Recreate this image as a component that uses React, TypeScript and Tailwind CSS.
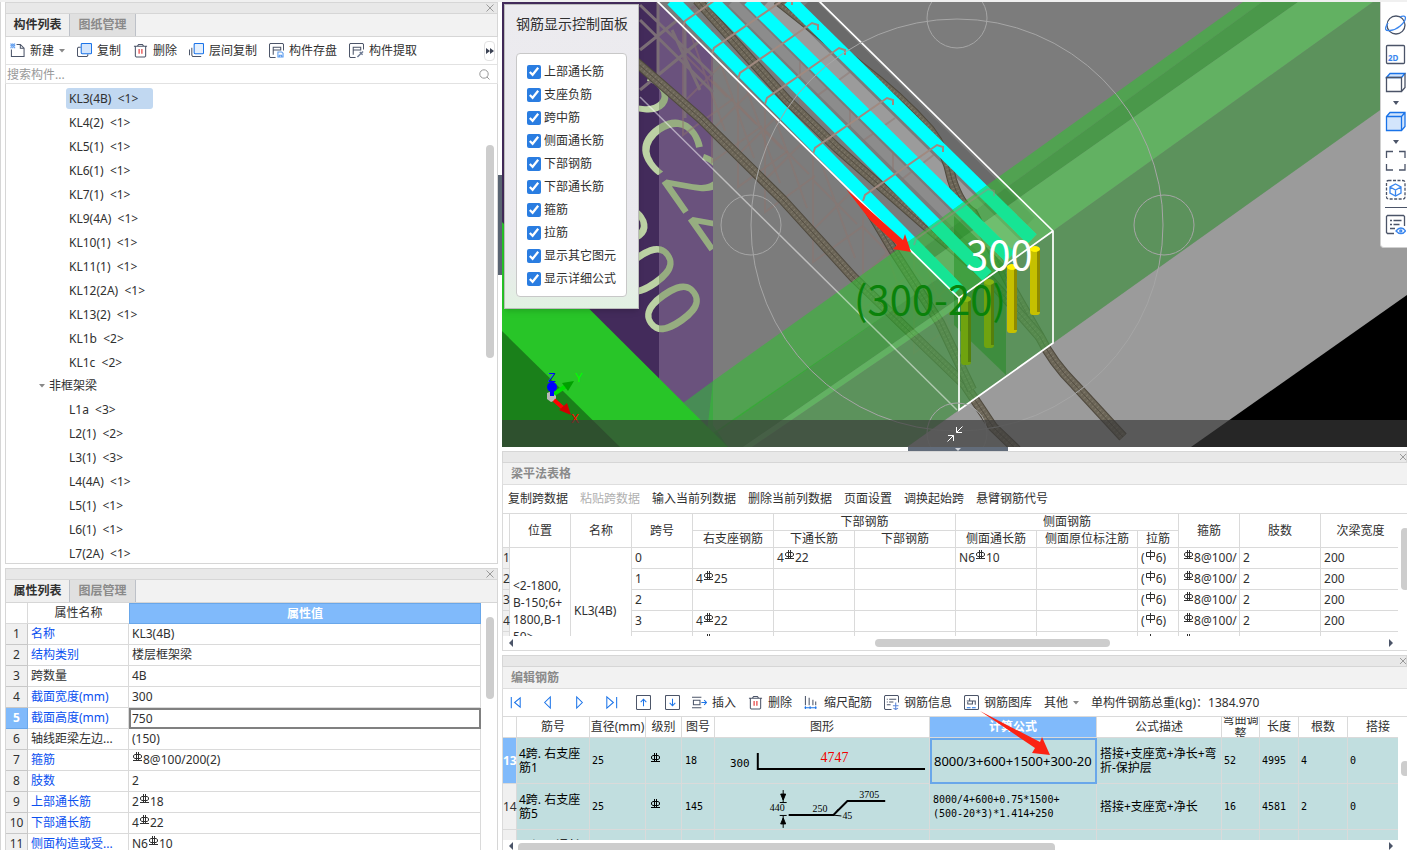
import type { ReactNode } from "react";
import clsx from "clsx";

type CellProps = { children?: ReactNode; className?: string };

const frameBeams = [
  "KL3(4B)  <1>",
  "KL4(2)  <1>",
  "KL5(1)  <1>",
  "KL6(1)  <1>",
  "KL7(1)  <1>",
  "KL9(4A)  <1>",
  "KL10(1)  <1>",
  "KL11(1)  <1>",
  "KL12(2A)  <1>",
  "KL13(2)  <1>",
  "KL1b  <2>",
  "KL1c  <2>",
];

const secondaryBeams = [
  "L1a  <3>",
  "L2(1)  <2>",
  "L3(1)  <3>",
  "L4(4A)  <1>",
  "L5(1)  <1>",
  "L6(1)  <1>",
  "L7(2A)  <1>",
];

const displayOptions = [
  "上部通长筋",
  "支座负筋",
  "跨中筋",
  "侧面通长筋",
  "下部钢筋",
  "下部通长筋",
  "箍筋",
  "拉筋",
  "显示其它图元",
  "显示详细公式",
];

// "#" marks the HRB400 grade sign, "$" the HPB300 one
const properties = [
  { name: "名称", value: "KL3(4B)", key: true },
  { name: "结构类别", value: "楼层框架梁", key: true },
  { name: "跨数量", value: "4B", key: false },
  { name: "截面宽度(mm)", value: "300", key: true },
  { name: "截面高度(mm)", value: "750", key: true },
  { name: "轴线距梁左边...", value: "(150)", key: false },
  { name: "箍筋", value: "#8@100/200(2)", key: true },
  { name: "肢数", value: "2", key: true },
  { name: "上部通长筋", value: "2#18", key: true },
  { name: "下部通长筋", value: "4#22", key: true },
  { name: "侧面构造或受...", value: "N6#10", key: true },
];

const spans = [
  { right: "", bottom: "4#22", side: "N6#10" },
  { right: "4#25", bottom: "", side: "" },
  { right: "", bottom: "", side: "" },
  { right: "4#22", bottom: "", side: "" },
  { right: "4#22", bottom: "", side: "" },
  { right: "", bottom: "", side: "" },
];

function Grade({ plain }: { plain?: boolean }) {
  return (
    <svg
      viewBox="0 0 11 10"
      className="inline-block w-[11px] h-[10px] align-[2px]"
      fill="none"
      stroke="currentColor"
    >
      {plain ? (
        <path d="M1.500 2.500h8v4h-8zM5.500 0v10" />
      ) : (
        <path d="M3 2.500h5l1.500 1v2L8 6.500H3L1.500 5.500v-2zM4.500 0v9M6.500 0v9M1 8.500h9" />
      )}
    </svg>
  );
}

function Rebar({ text }: { text: string }) {
  return (
    <>
      {text.split(/([#$])/).map((part, i) =>
        part === "#" || part === "$" ? (
          <Grade key={i} plain={part === "$"} />
        ) : (
          part
        )
      )}
    </>
  );
}

function Strip({ edge }: { edge?: boolean }) {
  return (
    <div className="h-3 shrink-0 flex justify-end items-center bg-[#e8e8e8] border border-[#d6d6d6]">
      <button
        aria-label="关闭"
        className={clsx("flex justify-center overflow-hidden", edge ? "w-[6px]" : "w-[14px]")}
      >
        <svg viewBox="0 0 8 8" className="size-2 shrink-0" stroke="#9a9a9a">
          <path d="M.5.5l7 7M7.500.5l-7 7" />
        </svg>
      </button>
    </div>
  );
}

function Tabs({ active, other }: { active: string; other: string }) {
  return (
    <div className="h-[23px] shrink-0 flex bg-[#f2f2f2] border-x border-b border-[#d6d6d6] leading-[22px]">
      <button className="w-16 border-r border-[#bdc1c8] bg-[#f0f0f0] font-bold">
        {active}
      </button>
      <button className="w-[66px] border-r border-[#bdc1c8] bg-[#e0e0e0] text-[#8a8a8a] font-bold">
        {other}
      </button>
    </div>
  );
}

function Tool({ icon, label }: { icon: ReactNode; label: string }) {
  return (
    <button className="flex items-center gap-[5px] whitespace-nowrap">
      {icon}
      {label}
    </button>
  );
}

function Caret() {
  return (
    <svg viewBox="0 0 6 4" className="w-[6px] h-1 shrink-0" fill="#888">
      <path d="M0 0h6L3 3.500z" />
    </svg>
  );
}

function Icon({ children }: { children: ReactNode }) {
  return (
    <svg
      viewBox="0 0 16 16"
      className="size-[15px] shrink-0"
      fill="none"
      stroke="#4b5468"
      strokeWidth="1.100"
    >
      {children}
    </svg>
  );
}

function TrashIcon() {
  return (
    <Icon>
      <path d="M1 3.500h14M4.500 3.500L6 1.500h4l1.500 2M2.500 4v10l1 1h9l1-1V4" />
      <path d="M6.500 6.500v5M9.500 6.500v5" stroke="#e02020" />
    </Icon>
  );
}

function ScrollArrow({ right }: { right?: boolean }) {
  return (
    <svg viewBox="0 0 4 8" className="w-1 h-2 shrink-0" fill="#4b5468">
      <path d={right ? "M0 0v8l4-4z" : "M4 0v8L0 4z"} />
    </svg>
  );
}

function ComponentPanel() {
  return (
    <section className="flex-1 min-h-0 flex flex-col">
      <Strip />
      <Tabs active="构件列表" other="图纸管理" />
      <div className="h-7 shrink-0 flex items-center gap-3 pl-1 pr-[2px] border-x border-b border-[#e2e2e2]">
        <button className="flex items-center gap-[5px] whitespace-nowrap">
          <Icon>
            <path d="M7 1.500h4l4 4v9H1.500V7M11 1.500v4h4" />
            <path
              d="M.5 1h1M2.500 1h1M4.500 1h1M1.500 2h1M3.500 2h1M.5 3h1M2.500 3h1M4.500 3h1M1.500 4h1M3.500 4h1M.5 5h1M2.500 5h1M4.500 5h1"
              stroke="#1a73e8"
            />
          </Icon>
          新建
          <Caret />
        </button>
        <Tool
          label="复制"
          icon={
            <Icon>
              <path d="M4 4.500H1.500l-1 1v8l1 1h9l1-1V12" />
              <rect x="4.500" y=".5" width="11" height="11" rx="1" fill="#d3e5fc" stroke="#1a73e8" />
            </Icon>
          }
        />
        <Tool label="删除" icon={<TrashIcon />} />
        <Tool
          label="层间复制"
          icon={
            <Icon>
              <path d="M.5 7v6M3 5v8l1 1.500h9" />
              <rect x="5.500" y=".5" width="10" height="11" rx="1" fill="#e3effd" stroke="#1a73e8" />
            </Icon>
          }
        />
        <Tool
          label="构件存盘"
          icon={
            <Icon>
              <path d="M7 15.500H1.500l-1-1v-13l1-1h13l1 1V8M4.500 12.500V4.500h8v3H5" />
              <path d="M9.500 9.500h4l1.500 1.500v4H9.500zM11 15v-2h2.500v2" stroke="#5b9bee" />
            </Icon>
          }
        />
        <Tool
          label="构件提取"
          icon={
            <Icon>
              <path d="M7 15.500H1.500l-1-1v-13l1-1h13l1 1V7M4.500 12.500V4.500h8v3H5" />
              <path d="M9 15l4-4M11.500 9.500l3 3M13 11l2-2" strokeWidth="1.500" stroke="#6d7a93" />
            </Icon>
          }
        />
        <button
          aria-label="更多"
          className="ml-auto w-[11px] h-5 rounded border border-[#e2e2e2] flex items-center justify-center"
        >
          <svg viewBox="0 0 8 6" className="w-2 h-[6px] shrink-0" fill="#3c4354">
            <path d="M0 0l4 3-4 3zM4 0l4 3-4 3z" />
          </svg>
        </button>
      </div>
      <div className="h-[19px] shrink-0 flex items-center pl-[1px] pr-[7px] border-x border-b border-[#e2e2e2]">
        <input
          type="text"
          aria-label="搜索构件"
          placeholder="搜索构件..."
          className="flex-1 h-[18px] outline-none placeholder:text-[#999]"
        />
        <svg viewBox="0 0 11 11" className="size-[11px]" fill="none" stroke="#999">
          <circle cx="5" cy="5" r="4.200" />
          <path d="M8 8l2.500 2.500" />
        </svg>
      </div>
      <div className="flex-1 min-h-0 flex border-x border-b border-[#d6d6d6]">
        <ul className="flex-1 overflow-hidden pt-[2px] whitespace-pre">
          {frameBeams.map((item, i) => (
            <li key={item} className="h-6 pl-[60px] flex items-center">
              <span
                className={clsx(
                  "w-[87px] h-[21px] px-[3px] leading-[21px]",
                  i === 0 && "rounded-[3px] bg-[#c1d8f1]"
                )}
              >
                {item}
              </span>
            </li>
          ))}
          <li className="h-6 pl-[33px] flex items-center gap-1">
            <Caret />
            非框架梁
          </li>
          {secondaryBeams.map((item) => (
            <li key={item} className="h-6 pl-[63px] flex items-center">
              {item}
            </li>
          ))}
        </ul>
        <div className="w-[11px] pt-[61px]">
          <div className="w-2 h-[213px] rounded bg-[#cdcdcd]" />
        </div>
      </div>
    </section>
  );
}

function PropertyPanel() {
  return (
    <section className="h-[282px] shrink-0 flex flex-col overflow-hidden">
      <Strip />
      <Tabs active="属性列表" other="图层管理" />
      <div className="flex-1 min-h-0 flex border-x border-[#d6d6d6] overflow-hidden">
        <div className="flex-1 overflow-hidden">
          <table className="w-full table-fixed border-separate border-spacing-0">
            <colgroup>
              <col className="w-[22px]" />
              <col className="w-[101px]" />
              <col />
            </colgroup>
            <thead>
              <tr className="h-[21px]">
                <th className="border-r border-b border-[#dadada]" />
                <th className="border-b border-[#dadada] font-normal">属性名称</th>
                <th className="border border-[#69a7ea] bg-[#80bafb] text-white font-bold">
                  属性值
                </th>
              </tr>
            </thead>
            <tbody>
              {properties.map((row, i) => {
                const selected = i === 4;
                return (
                  <tr key={row.name} className="h-[21px] leading-5">
                    <td
                      className={clsx(
                        "p-0 text-center border-r border-b",
                        selected
                          ? "bg-[#80bafb] border-[#69a7ea] text-white font-bold"
                          : "bg-[#f0f0f0] border-[#c8c8c8]"
                      )}
                    >
                      {i + 1}
                    </td>
                    <td
                      className={clsx(
                        "p-0 pl-[3px] border-r border-b border-[#dadada] whitespace-nowrap",
                        row.key && "text-[#0a50f0]"
                      )}
                    >
                      {row.name}
                    </td>
                    {selected ? (
                      <td className="p-0">
                        <input
                          aria-label={row.name}
                          defaultValue={row.value}
                          className="block w-full h-[21px] pl-px border-2 border-[#808080] outline-none"
                        />
                      </td>
                    ) : (
                      <td className="p-0 pl-[3px] border-r border-b border-[#dadada]">
                        <Rebar text={row.value} />
                      </td>
                    )}
                  </tr>
                );
              })}
            </tbody>
          </table>
        </div>
        <div className="w-4 pl-[5px] pt-[14px]">
          <div className="w-2 h-[82px] rounded bg-[#cdcdcd]" />
        </div>
      </div>
    </section>
  );
}

const ropes = [
  "M777 0L860 66Q900 96 930 130Q946 150 952 180Q960 205 973 213L1013 290L1040 337Q1052 362 1075 385L1123 437",
  "M697 0L787 100L837 148L925 225L990 280L1040 337",
  "M636 62L700 118L783 200L853 277L965 385L993 427L1017 450",
  "M868 208L893 250L940 323L972 390",
];

const bars = [
  "M672 0L958 290",
  "M711 0L987 276",
  "M749 0L1010 257",
  "M789 0L1032 239",
];

const stirrups = [
  [683, 23],
  [712, 50],
  [738, 75],
  [765, 100],
  [813, 150],
  [863, 197],
  [914, 241],
];

const yellowBars = [
  { x: 1030, y: 247, front: true },
  { x: 1007, y: 265, front: true },
  { x: 984, y: 280, front: false },
  { x: 961, y: 297, front: false },
];

function SlabLabel() {
  return (
    <g fontSize="80" fontFamily="Noto Sans, sans-serif">
      <text transform="translate(668 143) rotate(55)" x="-71" y="28">
        2C22
      </text>
      <text transform="translate(672 308) rotate(55)" x="-160" y="28">
        1200
      </text>
    </g>
  );
}

function Scene() {
  return (
    <svg
      viewBox="502 2 905 445"
      preserveAspectRatio="xMinYMin slice"
      className="absolute inset-0 size-full"
      fill="none"
    >
      <defs>
        <clipPath id="slab-side">
          <rect x="502" y="2" width="157" height="445" />
        </clipPath>
        <clipPath id="slab-face">
          <rect x="659" y="2" width="54" height="445" />
        </clipPath>
        <clipPath id="beam-joint">
          <path d="M905 244L1000 176L1053 231L959 298z" />
        </clipPath>
      </defs>
      <rect x="502" y="2" width="905" height="445" fill="#7c7c7c" />
      <path d="M907 447L1380 110L1407 91V447z" fill="#9b9b9b" />
      <path d="M1191 447L1407 295V447z" fill="#000" />

      {/* slab with its label */}
      <rect x="502" y="2" width="157" height="445" fill="#432b5b" />
      <rect x="659" y="2" width="54" height="445" fill="#6a527d" />
      <g clipPath="url(#slab-side)" fill="#bcd2a4">
        <SlabLabel />
      </g>
      <g clipPath="url(#slab-face)" fill="#96ad80">
        <SlabLabel />
      </g>
      <path d="M502 222L728 447H502z" fill="#28c528" />
      <path d="M502 331L620 447H502z" fill="#1a801a" />

      {/* beam body */}
      <path d="M658 2L959 298L1053 231L820 2z" fill="#7a7a7a" />
      <path d="M808 2L1030 222" stroke="#6a6a6a" strokeWidth="13" />
      <path d="M732 2L985 252" stroke="#8c8c8c" strokeWidth="10" />
      <path d="M768 2L1015 245" stroke="#9b9b9b" strokeWidth="14" />

      {/* stirrups */}
      <g stroke="#8d746c" strokeWidth="2" strokeOpacity=".45">
        {stirrups.map(([x, y]) => (
          <path
            key={x}
            d={`M${x} ${y}v112l50 -36M${x} ${y + 30}l44 44M${x} ${y + 80}l46 -46M${x + 8} ${y + 12}l34 96`}
          />
        ))}
        <path d="M800 62V108L850 72M850 110V150L895 118M893 140V186L940 150" />
      </g>
      <path
        d="M640 20L713 92M640 50L700 2M640 90L713 30M658 2V76M685 20V118M640 5L713 75M672 30L700 90"
        stroke="#7b6e76"
        strokeWidth="3"
      />

      {ropes.map((d) => (
        <g key={d} strokeLinejoin="round">
          <path d={d} stroke="#4f493e" strokeWidth="10" />
          <path d={d} stroke="#6b6557" strokeWidth="8" />
          <path d={d} stroke="#7f7869" strokeWidth="6" strokeDasharray="1 3" />
          <path d={d} stroke="#544e42" strokeWidth="1" />
        </g>
      ))}

      {bars.map((d) => (
        <path key={d} d={d} stroke="#00ffff" strokeWidth="13" />
      ))}

      {/* crossing beam, left of the selected one */}
      <path d="M683 403L713 381V425L728 447H640z" fill="#488c55" />
      <g fillOpacity=".6">
        <path d="M713 381L905 244L939 278L706 440z" fill="#36bd36" />
        <path d="M713 433L939 278L959 298L743 447H726z" fill="#2aac29" />
        <path d="M743 447L959 298V306L752 447z" fill="#51d651" />
        {/* over it and to the right */}
        <path d="M905 244L1243 2H1262L915 254z" fill="#36bd36" />
        <path d="M915 254L1262 2H1298L925 264z" fill="#2aac29" />
        <path d="M925 264L1298 2H1373L1053 231L959 298z" fill="#51d651" />
        <path d="M752 447L959 306V298L1053 231L1373 2H1407V91L907 447z" fill="#47a247" />
      </g>
      <path d="M640 360L728 447H640z" fill="#28c528" />
      <path d="M954 216L1006 266V375L954 325z" fill="#118811" fillOpacity=".4" />
      <g clipPath="url(#beam-joint)">
        {bars.map((d) => (
          <path key={d} d={d} stroke="#16e494" strokeWidth="13" />
        ))}
      </g>
      <g stroke="#a08a80" strokeWidth="2">
        {stirrups.map(([x, y]) => (
          <path
            key={x}
            d={`M${x} ${y + 4}l2 -6l72 -50l6 2v5`}
            strokeOpacity={x > 900 ? ".5" : "1"}
          />
        ))}
      </g>

      {yellowBars.map((bar) => (
        <g key={bar.x}>
          <rect
            x={bar.x}
            y={bar.y}
            width="10"
            height="68"
            rx="3"
            fill={bar.front ? "#c6c000" : "#6fa30f"}
          />
          <rect
            x={bar.x + 7}
            y={bar.y + 3}
            width="3"
            height="62"
            fill={bar.front ? "#8f8a00" : "#557f0c"}
          />
          <ellipse
            cx={bar.x + 5}
            cy={bar.y + 2}
            rx="5"
            ry="3"
            fill={bar.front ? "#fff200" : "#87b512"}
          />
        </g>
      ))}

      <path d="M640 97L957 410" stroke="#fff" strokeOpacity=".5" strokeWidth="1.500" />
      <path
        d="M657 1L959 298V410L1053 343V231L819 1M959 298L1053 231"
        stroke="#fff"
        strokeWidth="1.700"
      />

      <g stroke="#a6a6a6">
        <circle cx="957" cy="225" r="206" />
        <circle cx="957" cy="18" r="30" />
        <circle cx="751" cy="225" r="30" />
        <circle cx="1164" cy="225" r="30" />
        <circle cx="957" cy="433" r="30" />
      </g>

      <g fontSize="40" fontFamily="Noto Sans CJK SC, sans-serif">
        <text x="966" y="270" fill="#fff">
          300
        </text>
        <text x="854" y="315" fill="#0a820a">
          (300-20)
        </text>
      </g>
      <path
        d="M846 189L903 240L905 234L911 252L893 249L897 245L870 220z"
        fill="#fb2314"
      />

      {/* axes */}
      <path d="M547 393l5-2 4 3v6l-5 2-4-3z" fill="#b9b9b9" />
      <path d="M554 394L566 386" stroke="#00e000" strokeWidth="4" />
      <path d="M562 383L574 381L568 391z" fill="#00a000" />
      <path d="M554 400L563 408" stroke="#f00" strokeWidth="4" />
      <path d="M567 403L571 415L559 410z" fill="#d00000" />
      <rect x="550" y="386" width="4" height="10" fill="#00f" />
      <ellipse cx="552" cy="387" rx="5" ry="5" fill="#00f" />
      <g fontSize="12" fontFamily="Liberation Sans, sans-serif" textAnchor="middle">
        <text x="552" y="382" fill="#00f">
          Z
        </text>
        <text x="579" y="382" fill="#0f0">
          Y
        </text>
        <text x="575" y="423" fill="#f00">
          X
        </text>
      </g>
    </svg>
  );
}

function DisplayPanel() {
  return (
    <form className="absolute left-[2px] top-[2px] w-[135px] h-[305px] px-[11px] pt-[10px] border border-[#bcbcbc] bg-linear-to-t from-[#e2f1e2] via-[#eae9ee] via-20% to-[#ecebef] shadow-md">
      <h2 className="text-[14px] leading-[18px] whitespace-nowrap">钢筋显示控制面板</h2>
      <div className="mt-5 w-[111px] h-[244px] pt-[6px] pl-[10px] rounded border border-[#c8c8c8] bg-white">
        {displayOptions.map((option) => (
          <label key={option} className="h-[23px] flex items-center gap-[3px] whitespace-nowrap">
            <input type="checkbox" defaultChecked className="size-[14px] accent-[#2a7de1]" />
            {option}
          </label>
        ))}
      </div>
    </form>
  );
}

function ViewToolbar() {
  return (
    <div className="absolute right-0 top-0 w-[27px] h-[246px] rounded-bl bg-white border-l border-b border-[#d0d0d0] pl-1 pt-3 flex flex-col items-start overflow-hidden">
      <button aria-label="动态观察">
        <svg viewBox="0 0 21 21" className="size-[21px]" fill="none" stroke="#4b5468" strokeWidth="1.300">
          <circle cx="11" cy="11" r="9" />
          <path d="M3 9C-1 15 0 17 5 16.500C12 16 20 9 20.500 4C20.500 2 18 1.500 15 3" stroke="#3a86ee" />
        </svg>
      </button>
      <button aria-label="二维" className="mt-[9px]">
        <svg viewBox="0 0 21 21" className="size-[21px]" fill="none" stroke="#4b5468" strokeWidth="1.300">
          <rect x="1.500" y="1.500" width="18" height="18" rx="1" />
          <text x="3" y="17" fontSize="8" fontWeight="700" fontFamily="Noto Sans, sans-serif" fill="#3a86ee" stroke="none">
            2D
          </text>
        </svg>
      </button>
      <button aria-label="视图" className="mt-[7px] flex flex-col items-center">
        <svg viewBox="0 0 21 21" className="size-[21px]" fill="none" stroke="#4b5468" strokeWidth="1.300">
          <path d="M1.500 5.500L5 1.500h15L16.500 5.500z" fill="#d3e5fc" stroke="#1a73e8" />
          <path d="M1.500 5.500h15v14h-15zM16.500 19.500l3.500-4v-14" />
        </svg>
        <svg viewBox="0 0 6 4" className="mt-2 w-[6px] h-1" fill="#4b5468">
          <path d="M0 0h6L3 4z" />
        </svg>
      </button>
      <button aria-label="显示模式" className="mt-[6px] flex flex-col items-center">
        <svg viewBox="0 0 21 21" className="size-[21px]" fill="#d3e5fc" stroke="#1a73e8" strokeWidth="1.300">
          <path d="M1.500 5.500L5 1.500h15v14l-3.500 4h-15zM1.500 5.500h15v14M16.500 5.500l3.500-4" />
        </svg>
        <svg viewBox="0 0 6 4" className="mt-2 w-[6px] h-1" fill="#4b5468">
          <path d="M0 0h6L3 4z" />
        </svg>
      </button>
      <button aria-label="全屏" className="mt-[6px]">
        <svg viewBox="0 0 21 21" className="size-[21px]" fill="none" stroke="#4b5468" strokeWidth="1.300">
          <path d="M1.500 8V1.500H8M14 1.500h6V8M20 14v6h-6M8 20H1.500v-6" />
        </svg>
      </button>
      <button aria-label="局部三维" className="mt-2">
        <svg viewBox="0 0 21 21" className="size-[21px]" fill="none" stroke="#4b5468" strokeWidth="1.300">
          <rect x="1.500" y="1.500" width="18.500" height="18.500" rx="2" strokeDasharray="3 1.500" />
          <path d="M10.500 5l5.500 3v6l-5.500 3L5 14V8zM5 8l5.500 3L16 8M10.500 11v6" stroke="#3a86ee" />
        </svg>
      </button>
      <div className="mt-[7px] w-full h-px bg-[#4b5468]" />
      <button aria-label="显示设置" className="mt-[6px]">
        <svg viewBox="0 0 21 21" className="size-[21px]" fill="none" stroke="#4b5468" strokeWidth="1.300">
          <path d="M9 19.500H2.500l-1-1v-16l1-1h16l1 1V12M5 6.500h2M8.500 6.500h8M5 10.500h2M8.500 10.500h6M5 14.500h5" />
          <path d="M11 17c3-4 7-4 9.500 0c-2.500 3.500-6.500 3.500-9.500 0z" stroke="#3a86ee" />
          <circle cx="15.800" cy="17" r="1" stroke="#3a86ee" />
        </svg>
      </button>
    </div>
  );
}

function Viewport() {
  return (
    <section className="relative flex-1 min-h-0 overflow-hidden">
      <Scene />
      <div className="absolute inset-x-0 bottom-0 h-[27px] flex items-center justify-center bg-[#393939]/67">
        <button aria-label="收起">
          <svg viewBox="0 0 16 16" className="size-4" fill="none" stroke="#fff">
            <path d="M9.500 1v5.500H15M9.500 6.500L15.500.5M6.500 15V9.500H1M6.500 9.500L.5 15.500" />
          </svg>
        </button>
      </div>
      <DisplayPanel />
      <ViewToolbar />
    </section>
  );
}

function PanelTitle({ children }: { children: ReactNode }) {
  return (
    <h2 className="h-[22px] shrink-0 pl-2 leading-[21px] font-bold text-[#8a8a8a] bg-[#f2f2f2] border-l border-b border-[#dedede]">
      {children}
    </h2>
  );
}

function Th({
  children,
  className,
  colSpan,
  rowSpan,
}: CellProps & { colSpan?: number; rowSpan?: number }) {
  return (
    <th
      colSpan={colSpan}
      rowSpan={rowSpan}
      className={clsx(
        "p-0 leading-4 whitespace-nowrap border-r border-b border-[#dadada]",
        className || "font-normal"
      )}
    >
      {children}
    </th>
  );
}

function Td({ children, className, rowSpan }: CellProps & { rowSpan?: number }) {
  return (
    <td
      rowSpan={rowSpan}
      className={clsx("p-0 border-r border-b border-[#dadada] whitespace-nowrap", className)}
    >
      {children}
    </td>
  );
}

function BeamTablePanel() {
  return (
    <section className="h-[200px] shrink-0 flex flex-col border-b border-[#dadada]">
      <Strip edge />
      <PanelTitle>梁平法表格</PanelTitle>
      <div className="h-[29px] shrink-0 flex items-center gap-3 pl-[5px] border-b border-l border-[#dadada] whitespace-nowrap">
        <button>复制跨数据</button>
        <button disabled className="text-[#b0b0b0]">
          粘贴跨数据
        </button>
        <button>输入当前列数据</button>
        <button>删除当前列数据</button>
        <button>页面设置</button>
        <button>调换起始跨</button>
        <button>悬臂钢筋代号</button>
      </div>
      <div className="flex-1 min-h-0 flex border-l border-[#dadada]">
        <div className="flex-1 overflow-hidden">
          <table className="w-[898px] table-fixed border-separate border-spacing-0">
            <colgroup>
              <col className="w-[7px]" />
              <col className="w-[61px]" />
              <col className="w-[61px]" />
              <col className="w-[61px]" />
              <col className="w-[81px]" />
              <col className="w-[81px]" />
              <col className="w-[101px]" />
              <col className="w-[81px]" />
              <col className="w-[101px]" />
              <col className="w-[41px]" />
              <col className="w-[61px]" />
              <col className="w-[81px]" />
              <col className="w-20" />
            </colgroup>
            <thead>
              <tr className="h-[17px]">
                <Th rowSpan={2} />
                <Th rowSpan={2}>位置</Th>
                <Th rowSpan={2}>名称</Th>
                <Th rowSpan={2}>跨号</Th>
                <Th />
                <Th colSpan={2}>下部钢筋</Th>
                <Th colSpan={3}>侧面钢筋</Th>
                <Th rowSpan={2}>箍筋</Th>
                <Th rowSpan={2}>肢数</Th>
                <Th rowSpan={2}>次梁宽度</Th>
              </tr>
              <tr className="h-[17px]">
                <Th>右支座钢筋</Th>
                <Th>下通长筋</Th>
                <Th>下部钢筋</Th>
                <Th>侧面通长筋</Th>
                <Th>侧面原位标注筋</Th>
                <Th>拉筋</Th>
              </tr>
            </thead>
            <tbody>
              {spans.map((span, i) => (
                <tr key={i} className="h-[21px] leading-5">
                  <Td className="bg-[#f0f0f0]">{i + 1}</Td>
                  {i === 0 && (
                    <>
                      <Td rowSpan={6} className="pl-[3px] leading-[17px]">
                        {"<2-1800,"}
                        <br />
                        B-150;6+
                        <br />
                        1800,B-1
                        <br />
                        {"50>"}
                      </Td>
                      <Td rowSpan={6} className="pl-[3px]">
                        KL3(4B)
                      </Td>
                    </>
                  )}
                  <Td className="pl-[3px]">{i}</Td>
                  <Td className="pl-[3px]">
                    <Rebar text={span.right} />
                  </Td>
                  <Td className="pl-[3px]">
                    <Rebar text={span.bottom} />
                  </Td>
                  <Td />
                  <Td className="pl-[3px]">
                    <Rebar text={span.side} />
                  </Td>
                  <Td />
                  <Td className="pl-[3px]">
                    <Rebar text="($6)" />
                  </Td>
                  <Td className="pl-1">
                    <Rebar text="#8@100/" />
                  </Td>
                  <Td className="pl-[3px]">2</Td>
                  <Td className="pl-[3px]">200</Td>
                </tr>
              ))}
            </tbody>
          </table>
        </div>
        <div className="w-[9px] pl-[3px] pt-[14px] overflow-hidden">
          <div className="w-2 h-[62px] rounded bg-[#cdcdcd]" />
        </div>
      </div>
      <div className="h-[14px] shrink-0 flex items-center pl-[6px] pr-[14px] border-l border-[#dadada]">
        <ScrollArrow />
        <div className="flex-1 flex pl-1">
          <div className="basis-[41%]" />
          <div className="basis-[27%] h-2 rounded bg-[#cdcdcd]" />
        </div>
        <ScrollArrow right />
      </div>
    </section>
  );
}

function BentBar() {
  return (
    <svg viewBox="0 0 215 45" className="block w-full h-[45px]" fill="none" stroke="#000">
      <path d="M43 15V31H211" strokeWidth="2" />
      <g stroke="none">
        <text x="15" y="29" fontSize="11" fontFamily="DejaVu Sans Mono, monospace" fill="#000">
          300
        </text>
        <text x="106" y="24" fontSize="14" fontFamily="Liberation Serif, serif" fill="#f00000">
          4747
        </text>
      </g>
    </svg>
  );
}

function OffsetBar() {
  return (
    <svg viewBox="0 0 215 45" className="block w-full h-[45px]" fill="none" stroke="#000">
      <path d="M74 31H119L133 17H171" strokeWidth="2" />
      <path d="M68.500 6v12M65 18.500h7M65 31.500h7M68.500 32v12M119 31l5-6M117 31l10 1" />
      <path d="M66 10h5l-2.500 6zM66 40h5l-2.500-6z" fill="#000" />
      <g stroke="none" fill="#000" fontSize="10" fontFamily="Liberation Serif, serif">
        <text x="55" y="27">
          440
        </text>
        <text x="98" y="28">
          250
        </text>
        <text x="145" y="14">
          3705
        </text>
        <text x="128" y="35">
          45
        </text>
      </g>
    </svg>
  );
}

function RebarPanel() {
  const mono = "font-['DejaVu_Sans_Mono',monospace] text-[10px]";

  return (
    <section className="relative h-[195px] shrink-0 flex flex-col overflow-hidden">
      <Strip edge />
      <PanelTitle>编辑钢筋</PanelTitle>
      <div className="h-7 shrink-0 flex items-center gap-3 pl-[5px] border-b border-l border-[#dadada] whitespace-nowrap">
        <div className="flex gap-[17px] pr-[2px]">
          <button aria-label="首条">
            <Icon>
              <path d="M3.500 2v12M13 3v10L7 8z" stroke="#1a73e8" />
            </Icon>
          </button>
          <button aria-label="上一条">
            <Icon>
              <path d="M11 2v12L5 8z" stroke="#1a73e8" />
            </Icon>
          </button>
          <button aria-label="下一条">
            <Icon>
              <path d="M5 2v12l6-6z" stroke="#1a73e8" />
            </Icon>
          </button>
          <button aria-label="末条">
            <Icon>
              <path d="M13.500 2v12M3 2v12l7-6z" stroke="#1a73e8" />
            </Icon>
          </button>
          <button aria-label="上移">
            <Icon>
              <rect x=".5" y=".5" width="15" height="15" rx="1" />
              <path d="M8 12V4.500M5 7.500l3-3 3 3" stroke="#1a73e8" />
            </Icon>
          </button>
        </div>
        <button aria-label="下移">
          <Icon>
            <rect x=".5" y=".5" width="15" height="15" rx="1" />
            <path d="M8 4v7.500M5 8.500l3 3 3-3" stroke="#1a73e8" />
          </Icon>
        </button>
        <Tool
          label="插入"
          icon={
            <Icon>
              <path d="M0 2.500h10M0 13.500h10M1.500 5.500h7v5h-7z" />
              <path d="M10 8h5.500M13 5.500L15.500 8 13 10.500" stroke="#1a73e8" />
            </Icon>
          }
        />
        <Tool label="删除" icon={<TrashIcon />} />
        <Tool
          label="缩尺配筋"
          icon={
            <Icon>
              <path d="M1.500 1v10M5.500 3v8M9.500 5v6M12.500 7v4" />
              <path d="M.5 13.500h13M1.500 12v3M6.500 12v3M12.500 12v3" stroke="#1a73e8" />
            </Icon>
          }
        />
        <Tool
          label="钢筋信息"
          icon={
            <Icon>
              <path d="M8 15.500H1.500l-1-1v-13l1-1h13l1 1V8M3 4.500h1M5.500 4.500H13M3 7.500h1M5.500 7.500H10M3 10.500h4" />
              <path d="M12.500 8v3M9.500 11.500h6M10 14l2.500 1.500L15 14M12.500 11v4" stroke="#5b86d8" />
            </Icon>
          }
        />
        <Tool
          label="钢筋图库"
          icon={
            <Icon>
              <rect x=".5" y=".5" width="15" height="15" rx="1.500" />
              <path d="M3 6.500h6V9.500H4v-2M6 6V3.500M9 6.500h3v4" />
              <path d="M3 13.500h4M8.500 13.500h4" stroke="#1a73e8" />
            </Icon>
          }
        />
        <button className="flex items-center gap-[5px]">
          其他
          <Caret />
        </button>
        <span>单构件钢筋总重(kg)：1384.970</span>
      </div>
      <div className="flex-1 min-h-0 flex border-l border-[#dadada]">
        <div className="flex-1 overflow-hidden">
          <table className="w-[906px] table-fixed border-separate border-spacing-0">
            <colgroup>
              <col className="w-[14px]" />
              <col className="w-[73px]" />
              <col className="w-14" />
              <col className="w-9" />
              <col className="w-[33px]" />
              <col className="w-[215px]" />
              <col className="w-[167px]" />
              <col className="w-[125px]" />
              <col className="w-[38px]" />
              <col className="w-[39px]" />
              <col className="w-[49px]" />
              <col className="w-[61px]" />
            </colgroup>
            <thead>
              <tr className="h-[21px]">
                <Th />
                <Th>筋号</Th>
                <Th>直径(mm)</Th>
                <Th>级别</Th>
                <Th>图号</Th>
                <Th>图形</Th>
                <Th className="bg-[#80bafb] text-white font-bold">计算公式</Th>
                <Th>公式描述</Th>
                <Th>
                  <div className="h-5 flex flex-col justify-center leading-[14px] overflow-hidden">
                    <span>弯曲调</span>
                    <span>整</span>
                  </div>
                </Th>
                <Th>长度</Th>
                <Th>根数</Th>
                <Th>搭接</Th>
              </tr>
            </thead>
            <tbody className="bg-[#c1dedf] text-black leading-[14px]">
              <tr className="h-[46px]">
                <Td className="bg-[#80bafb] text-white font-bold">13</Td>
                <Td className="pl-[2px]">
                  4跨. 右支座
                  <br />
                  筋1
                </Td>
                <Td className={clsx("pl-[2px]", mono)}>25</Td>
                <Td className="pl-1">
                  <Grade />
                </Td>
                <Td className={clsx("pl-[3px]", mono)}>18</Td>
                <Td>
                  <BentBar />
                </Td>
                <td className="p-0">
                  <input
                    aria-label="计算公式"
                    defaultValue="8000/3+600+1500+300-20"
                    className="block w-full h-[46px] pl-[2px] text-[13px] border-2 border-[#69a7ea] outline-none"
                  />
                </td>
                <Td className="pl-[3px]">
                  搭接+支座宽+净长+弯
                  <br />
                  折-保护层
                </Td>
                <Td className={clsx("pl-[2px]", mono)}>52</Td>
                <Td className={clsx("pl-[2px]", mono)}>4995</Td>
                <Td className={clsx("pl-[2px]", mono)}>4</Td>
                <Td className={clsx("pl-[2px]", mono)}>0</Td>
              </tr>
              <tr className="h-[46px]">
                <Td className="bg-[#f0f0f0] text-[#303030]">14</Td>
                <Td className="pl-[2px]">
                  4跨. 右支座
                  <br />
                  筋5
                </Td>
                <Td className={clsx("pl-[2px]", mono)}>25</Td>
                <Td className="pl-1">
                  <Grade />
                </Td>
                <Td className={clsx("pl-[3px]", mono)}>145</Td>
                <Td>
                  <OffsetBar />
                </Td>
                <Td className={clsx("pl-[3px]", mono)}>
                  8000/4+600+0.75*1500+
                  <br />
                  (500-20*3)*1.414+250
                </Td>
                <Td className="pl-[3px]">搭接+支座宽+净长</Td>
                <Td className={clsx("pl-[2px]", mono)}>16</Td>
                <Td className={clsx("pl-[2px]", mono)}>4581</Td>
                <Td className={clsx("pl-[2px]", mono)}>2</Td>
                <Td className={clsx("pl-[2px]", mono)}>0</Td>
              </tr>
              <tr className="h-[46px]">
                <Td className="bg-[#f0f0f0] text-[#303030]">15</Td>
                <Td className="pl-[2px]">
                  4跨. 下通长
                  <br />
                  筋1
                </Td>
                {Array.from({ length: 10 }, (_, i) => (
                  <Td key={i} />
                ))}
              </tr>
            </tbody>
          </table>
        </div>
        <div className="w-[9px] pl-[3px] pt-11 overflow-hidden">
          <div className="w-2 h-[15px] rounded bg-[#cdcdcd]" />
        </div>
      </div>
      <div className="h-[10px] shrink-0 flex items-end gap-[5px] pl-[6px] pr-[14px] border-l border-[#dadada]">
        <ScrollArrow />
        <div className="flex-1 flex">
          <div className="basis-[62%] h-[7px] rounded-t bg-[#cdcdcd]" />
        </div>
        <ScrollArrow right />
      </div>
      <svg
        viewBox="0 0 71 45"
        className="absolute left-[478px] top-14 w-[71px] h-[45px] pointer-events-none"
        fill="#fb2314"
      >
        <path d="M0 0L60 31L62 26L70 44L52 42L55 37z" />
      </svg>
    </section>
  );
}

export default function App() {
  return (
    <div className="h-screen flex overflow-hidden border-t-2 border-[#f0f0f0] bg-white text-[12px] leading-4 text-[#303030] font-['Noto_Sans','Noto_Sans_CJK_SC',sans-serif]">
      <div className="w-[5px] shrink-0 border-l border-[#d6d6d6]" />
      <aside className="w-[493px] shrink-0 flex flex-col gap-1">
        <ComponentPanel />
        <PropertyPanel />
      </aside>
      <div className="w-1 shrink-0 pt-[173px]">
        <div className="h-[100px] bg-[#5a6472]" />
      </div>
      <main className="flex-1 min-w-0 flex flex-col">
        <Viewport />
        <div className="h-1 shrink-0 flex justify-center pl-[6px]">
          <button aria-label="折叠" className="w-[100px] bg-[#626c7a] flex justify-center">
            <svg viewBox="0 0 6 4" className="w-[6px] h-1" fill="#d0d4da">
              <path d="M0 1h6L3 4z" />
            </svg>
          </button>
        </div>
        <BeamTablePanel />
        <div className="h-1 shrink-0" />
        <RebarPanel />
      </main>
    </div>
  );
}
